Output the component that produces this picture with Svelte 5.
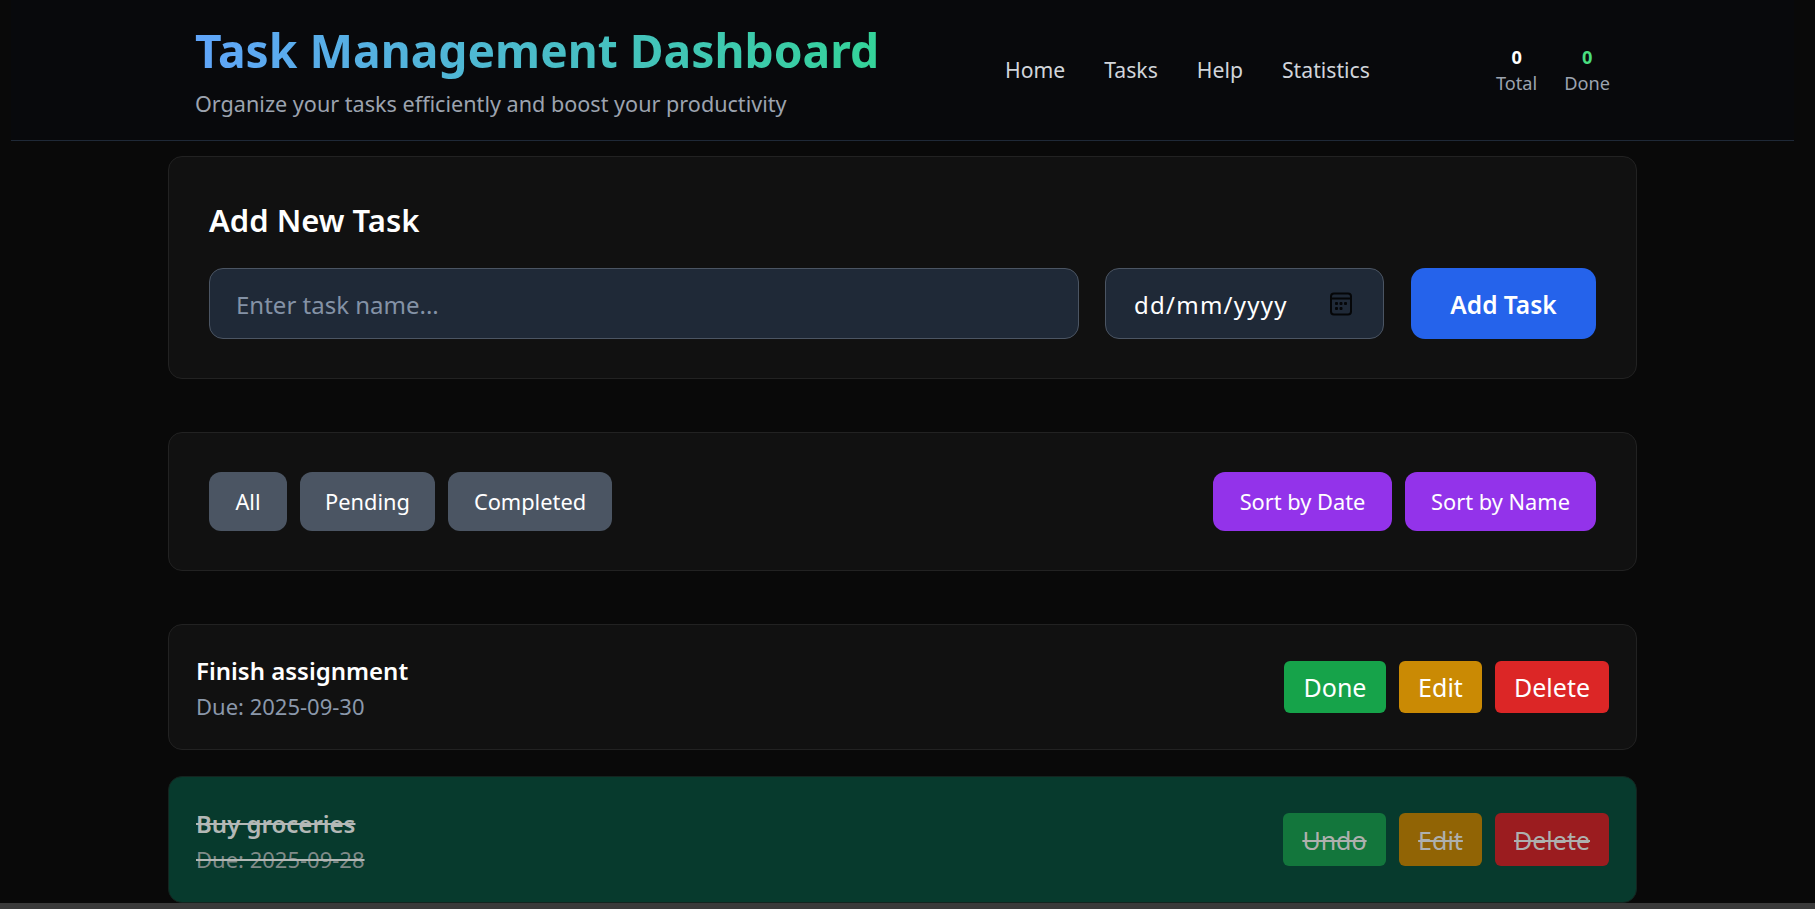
<script>
  const navItems = ['Home', 'Tasks', 'Help', 'Statistics'];
  const filters = [
    { label: 'All', width: 78 },
    { label: 'Pending', width: 135 },
    { label: 'Completed', width: 164 }
  ];
  const tasks = [
    { name: 'Finish assignment', due: '2025-09-30', done: false },
    { name: 'Buy groceries', due: '2025-09-28', done: true }
  ];
</script>

<div class="page">
  <header class="header">
    <div class="brand">
      <h1>Task Management Dashboard</h1>
      <p>Organize your tasks efficiently and boost your productivity</p>
    </div>
    <nav class="nav">
      {#each navItems as item}
        <a href="#top">{item}</a>
      {/each}
    </nav>
    <div class="stats">
      <div class="stat"><strong>0</strong><span>Total</span></div>
      <div class="stat"><strong class="green">0</strong><span>Done</span></div>
    </div>
  </header>

  <main class="main">
    <section class="card add">
      <h2>Add New Task</h2>
      <div class="form">
        <input class="field name" type="text" placeholder="Enter task name..." />
        <div class="field date">
          <span>dd/mm/yyyy</span>
          <svg width="24" height="24" viewBox="0 0 24 24" fill="none" aria-hidden="true">
            <rect x="2" y="1.5" width="20" height="21" rx="3" stroke="#050608" stroke-width="2" />
            <path d="M2 6.5h20" stroke="#050608" stroke-width="2" />
            <g fill="#050608">
              <rect x="6" y="10" width="3" height="3" rx="1" />
              <rect x="10.5" y="10" width="3" height="3" rx="1" />
              <rect x="15" y="10" width="3" height="3" rx="1" />
              <rect x="6" y="15" width="3" height="3" rx="1" />
              <rect x="10.5" y="15" width="3" height="3" rx="1" />
            </g>
          </svg>
        </div>
        <button class="add-btn">Add Task</button>
      </div>
    </section>

    <section class="card toolbar">
      <div class="group">
        {#each filters as f}
          <button class="pill gray" style="width: {f.width}px">{f.label}</button>
        {/each}
      </div>
      <div class="group">
        <button class="pill purple sort-date">Sort by Date</button>
        <button class="pill purple sort-name">Sort by Name</button>
      </div>
    </section>

    <section class="list">
      {#each tasks as t}
        <article class="task" class:done={t.done}>
          <div class="info">
            <div class="title">{t.name}</div>
            <div class="due">Due: {t.due}</div>
          </div>
          <div class="actions">
            <button class="act first green-bg">{t.done ? 'Undo' : 'Done'}</button>
            <button class="act edit">Edit</button>
            <button class="act del">Delete</button>
          </div>
        </article>
      {/each}
    </section>
  </main>

  <div class="hbar"></div>
</div>

<style>
  :global(html), :global(body) {
    margin: 0;
    height: 100%;
    overflow: hidden;
    background: #090909;
  }
  * { box-sizing: border-box; }
  .page {
    position: relative;
    height: 909px;
    padding: 0 21px 0 11px;
    overflow: hidden;
    font-family: "Noto Sans", "Open Sans", sans-serif;
    color: #fff;
  }
  button, input { font-family: inherit; border: 0; color: #fff; }

  .header {
    height: 141px;
    display: flex;
    align-items: flex-start;
    padding: 0 184px;
    background: #08090c;
    border-bottom: 1px solid #1f2937;
  }
  .brand { width: 810px; padding-top: 19px; }
  h1 {
    margin: 0;
    width: max-content;
    font-size: 46.2px;
    line-height: 64px;
    font-weight: 700;
    background: linear-gradient(90deg, #60a5fa, #34d399);
    -webkit-background-clip: text;
    background-clip: text;
    color: transparent;
  }
  .brand p {
    margin: 6px 0 0;
    font-size: 21.6px;
    line-height: 30px;
    color: #9ca3af;
  }
  .nav {
    display: flex;
    gap: 39px;
    width: 491px;
    padding-top: 53px;
  }
  .nav a {
    font-size: 21.2px;
    line-height: 34px;
    color: #d1d5db;
    text-decoration: none;
  }
  .stats {
    display: flex;
    gap: 27px;
    padding-top: 44px;
  }
  .stat {
    display: flex;
    flex-direction: column;
    align-items: center;
    font-size: 18.2px;
    line-height: 26px;
  }
  .stat strong { font-weight: 700; color: #fff; }
  .stat strong.green { color: #4ade80; }
  .stat span { color: #9ca3af; }

  .main {
    width: 1469px;
    margin: 0 auto;
    padding-top: 15px;
  }
  .card {
    background: #111111;
    border: 1px solid #222222;
    border-radius: 14px;
    padding: 39px 40px;
  }
  h2 {
    margin: 0 0 24px;
    font-size: 31px;
    line-height: 48px;
    font-weight: 600;
  }
  .form { display: flex; }
  .field {
    height: 71px;
    background: #1f2937;
    border: 1px solid #4b5563;
    border-radius: 14px;
    font-size: 24px;
  }
  .name {
    width: 870px;
    padding: 2px 26px 0;
    outline: 0;
  }
  .name::placeholder { color: #8492a6; opacity: 1; }
  .date {
    width: 279px;
    margin-left: 26px;
    padding: 0 30px 0 28px;
    display: flex;
    align-items: center;
    justify-content: space-between;
    letter-spacing: 1.25px;
  }
  .date span { padding-top: 2px; }
  .add-btn {
    width: 185px;
    height: 71px;
    margin-left: 27px;
    padding: 2px 0 0;
    border-radius: 14px;
    background: #2563eb;
    font-size: 24.5px;
    font-weight: 600;
  }

  .toolbar {
    margin-top: 53px;
    display: flex;
    justify-content: space-between;
  }
  .group { display: flex; gap: 13px; }
  .pill {
    height: 59px;
    border-radius: 12px;
    font-size: 21.8px;
    padding: 0;
  }
  .gray { background: #4b5563; }
  .purple { background: #9333ea; }
  .sort-date { width: 179px; }
  .sort-name { width: 191px; }

  .list {
    margin-top: 53px;
    display: flex;
    flex-direction: column;
    gap: 26px;
  }
  .task {
    height: 126px;
    display: flex;
    align-items: center;
    justify-content: space-between;
    padding: 0 27px;
    background: #111111;
    border: 1px solid #222222;
    border-radius: 14px;
  }
  .info { padding-top: 3px; }
  .title {
    font-size: 24px;
    line-height: 34px;
    font-weight: 600;
  }
  .due {
    font-size: 22px;
    line-height: 34px;
    color: #8b98ab;
    margin-top: 1px;
  }
  .actions { display: flex; gap: 13px; }
  .act {
    height: 52px;
    border-radius: 6px;
    font-size: 25px;
    padding: 0;
  }
  .first { width: 102px; }
  .edit { width: 83px; background: #ca8a04; }
  .del { width: 114px; background: #dc2626; }
  .green-bg { background: #16a34a; }

  .task.done {
    height: 127px;
    background: #073a2d;
    border-color: #14241f;
  }
  .done .info { padding-top: 4px; }
  .done .title { color: #b3b8b6; text-decoration: line-through; }
  .done .due { color: #7f8a88; text-decoration: line-through; text-decoration-color: #b3b8b6; }
  .done .act { height: 53px; color: #aeb0ae; text-decoration: line-through; }
  .done .first { width: 103px; background: #13763c; }
  .done .edit { background: #916405; }
  .done .del { background: #9b1c1f; }

  .hbar {
    position: absolute;
    left: 0;
    right: 0;
    bottom: 0;
    height: 6px;
    background: #3a3a3a;
  }
</style>
